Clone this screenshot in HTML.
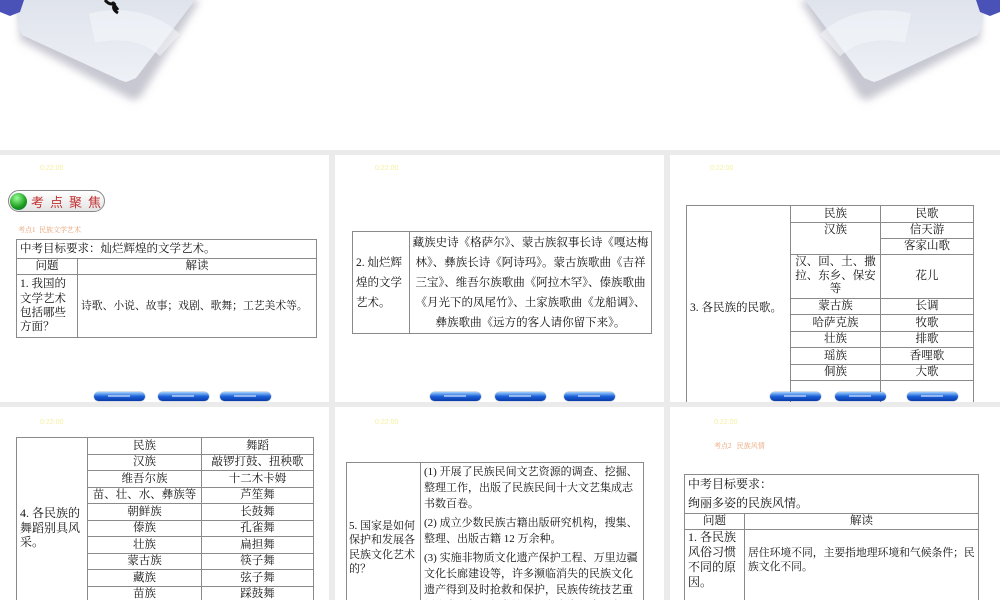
<!DOCTYPE html>
<html><head><meta charset="utf-8"><style>
*{margin:0;padding:0;box-sizing:border-box}
body{width:1000px;height:600px;overflow:hidden;background:#ebebeb;position:relative;font-family:"Liberation Serif","Noto Serif CJK SC","Noto Sans CJK SC",serif;color:#111}
.top{position:absolute;left:0;top:0;width:1000px;height:150px;background:#fff}
.s{position:absolute;background:#fff;overflow:hidden}
.tm{position:absolute;font-size:7px;color:#f4f0a0;font-family:"Liberation Sans",sans-serif}
table{position:absolute;border-collapse:collapse;font-size:11.5px;line-height:1.3;table-layout:fixed}
td{border:1px solid #8a8a8a;padding:0 3px;vertical-align:middle;overflow:hidden}
.c{text-align:center}
.btn{position:absolute;width:51px;height:9px;border-radius:5px;background:linear-gradient(#9fd0ff,#1a5fd8 50%,#0a3aa8);box-shadow:0 0 1px #024}
.btn:after{content:"";position:absolute;left:14px;top:3px;width:22px;height:2px;background:#d8e8ff;opacity:.6}
.k{position:absolute;font-size:7px;color:#e8a070}
</style></head><body>
<div class="top">
<svg width="1000" height="150" style="position:absolute;left:0;top:0">
<defs><linearGradient id="g" x1="0" y1="0" x2="0" y2="1"><stop offset="0" stop-color="#dfe3ec"/><stop offset="1" stop-color="#eef1f6"/></linearGradient>
<filter id="b"><feGaussianBlur stdDeviation="4"/></filter></defs>
<polygon points="18,0 200,0 140,98 132,100 20,40" fill="#c8c8d2" filter="url(#b)"/>
<polygon points="15,0 195,0 136,78 126,82 120,80 22,35 18,26" fill="url(#g)"/>
<path d="M92,28 Q140,18 170,45" stroke="#f4f6fa" stroke-width="30" fill="none" opacity=".6"/>
<polygon points="0,0 24,0 20,12 10,16 0,12" fill="#4a52b8"/>
<path d="M105,0 q5,6 10,3 q-4,6 3,10 M112,2 l6,8" stroke="#111" stroke-width="3" fill="none"/>
<g transform="translate(1000,0) scale(-1,1)">
<polygon points="18,0 200,0 140,98 132,100 20,40" fill="#c8c8d2" filter="url(#b)"/>
<polygon points="15,0 195,0 136,78 126,82 120,80 22,35 18,26" fill="url(#g)"/>
<path d="M92,28 Q140,18 170,45" stroke="#f4f6fa" stroke-width="30" fill="none" opacity=".6"/>
<polygon points="0,0 24,0 20,12 10,16 0,12" fill="#4a52b8"/>
</g></svg>
</div>

<!-- slide 1 -->
<div class="s" style="left:0;top:155px;width:329px;height:247px">
<div class="tm" style="left:40px;top:10px">0:22:00</div>
<div style="position:absolute;left:8px;top:35px;width:97px;height:22px;border:1px solid #888;border-radius:11px;background:linear-gradient(#fff,#e4e4e4)"></div>
<div style="position:absolute;left:10px;top:38px;width:17px;height:17px;border-radius:50%;background:radial-gradient(circle at 40% 30%,#9f9,#1a9a1a 60%,#065)"></div>
<div style="position:absolute;left:31px;top:37px;font-size:13px;color:#c03030;letter-spacing:6px;font-family:'Noto Sans CJK SC',sans-serif">考点聚焦</div>
<div class="k" style="left:18px;top:70px">考点1&nbsp; 民族文学艺术</div>
<table style="left:16px;top:84px;width:300px">
<colgroup><col style="width:61px"><col style="width:239px"></colgroup>
<tr style="height:19px"><td colspan="2">中考目标要求：灿烂辉煌的文学艺术。</td></tr>
<tr style="height:16px"><td class="c">问题</td><td class="c">解读</td></tr>
<tr style="height:63px"><td style="line-height:1.25">1. 我国的文学艺术包括哪些方面？</td><td style="font-size:10.8px;white-space:nowrap">诗歌、小说、故事；戏剧、歌舞；工艺美术等。</td></tr>
</table>
<div class="btn" style="left:94px;top:237px"></div><div class="btn" style="left:158px;top:237px"></div><div class="btn" style="left:220px;top:237px"></div>
</div>

<!-- slide 2 -->
<div class="s" style="left:335px;top:155px;width:329px;height:247px">
<div class="tm" style="left:40px;top:10px">0:22:00</div>
<table style="left:17px;top:76px;width:299px">
<colgroup><col style="width:57px"><col style="width:242px"></colgroup>
<tr style="height:102px"><td style="line-height:20px">2. 灿烂辉煌的文学艺术。</td><td class="c" style="line-height:20px;padding:0 2px">藏族史诗《格萨尔》、蒙古族叙事长诗《嘎达梅林》、彝族长诗《阿诗玛》。蒙古族歌曲《吉祥三宝》、维吾尔族歌曲《阿拉木罕》、傣族歌曲《月光下的凤尾竹》、土家族歌曲《龙船调》、彝族歌曲《远方的客人请你留下来》。</td></tr>
</table>
<div class="btn" style="left:95px;top:237px"></div><div class="btn" style="left:160px;top:237px"></div><div class="btn" style="left:229px;top:237px"></div>
</div>

<!-- slide 3 -->
<div class="s" style="left:670px;top:155px;width:330px;height:247px">
<div class="tm" style="left:40px;top:10px">0:22:00</div>
<table style="left:16px;top:50px;width:287px">
<colgroup><col style="width:104px"><col style="width:90px"><col style="width:93px"></colgroup>
<tr style="height:17px"><td rowspan="10">3. 各民族的民歌。</td><td class="c">民族</td><td class="c">民歌</td></tr>
<tr style="height:16px"><td class="c" rowspan="2" style="vertical-align:top">汉族</td><td class="c">信天游</td></tr>
<tr style="height:16px"><td class="c">客家山歌</td></tr>
<tr style="height:44px"><td class="c" style="line-height:1.2">汉、回、土、撒拉、东乡、保安等</td><td class="c">花儿</td></tr>
<tr style="height:16px"><td class="c">蒙古族</td><td class="c">长调</td></tr>
<tr style="height:17px"><td class="c">哈萨克族</td><td class="c">牧歌</td></tr>
<tr style="height:16px"><td class="c">壮族</td><td class="c">排歌</td></tr>
<tr style="height:17px"><td class="c">瑶族</td><td class="c">香哩歌</td></tr>
<tr style="height:16px"><td class="c">侗族</td><td class="c">大歌</td></tr>
<tr style="height:30px"><td></td><td></td></tr>
</table>
<div class="btn" style="left:100px;top:237px"></div><div class="btn" style="left:165px;top:237px"></div><div class="btn" style="left:237px;top:237px"></div>
</div>

<!-- slide 4 -->
<div class="s" style="left:0;top:407px;width:329px;height:193px">
<div class="tm" style="left:40px;top:12px">0:22:00</div>
<table style="left:16px;top:30px;width:297px">
<colgroup><col style="width:71px"><col style="width:114px"><col style="width:112px"></colgroup>
<tr style="height:17px"><td rowspan="11" style="line-height:1.2;font-size:12px">4. 各民族的舞蹈别具风采。</td><td class="c">民族</td><td class="c">舞蹈</td></tr>
<tr style="height:16px"><td class="c">汉族</td><td class="c">敲锣打鼓、扭秧歌</td></tr>
<tr style="height:17px"><td class="c">维吾尔族</td><td class="c">十二木卡姆</td></tr>
<tr style="height:16px"><td class="c">苗、壮、水、彝族等</td><td class="c">芦笙舞</td></tr>
<tr style="height:17px"><td class="c">朝鲜族</td><td class="c">长鼓舞</td></tr>
<tr style="height:16px"><td class="c">傣族</td><td class="c">孔雀舞</td></tr>
<tr style="height:17px"><td class="c">壮族</td><td class="c">扁担舞</td></tr>
<tr style="height:16px"><td class="c">蒙古族</td><td class="c">筷子舞</td></tr>
<tr style="height:17px"><td class="c">藏族</td><td class="c">弦子舞</td></tr>
<tr style="height:16px"><td class="c">苗族</td><td class="c">踩鼓舞</td></tr>
<tr style="height:16px"><td class="c"></td><td class="c"></td></tr>
</table>
</div>

<!-- slide 5 -->
<div class="s" style="left:335px;top:407px;width:329px;height:193px">
<div class="tm" style="left:40px;top:12px">0:22:00</div>
<table style="left:11px;top:55px;width:297px;font-size:11px">
<colgroup><col style="width:74px"><col style="width:223px"></colgroup>
<tr><td style="line-height:1.3;padding:0 2px">5. 国家是如何保护和发展各民族文化艺术的？</td>
<td style="line-height:1.45;padding:2px 3px">(1) 开展了民族民间文艺资源的调查、挖掘、整理工作，出版了民族民间十大文艺集成志书数百卷。<div style="height:3px"></div>(2) 成立少数民族古籍出版研究机构，搜集、整理、出版古籍 12 万余种。<div style="height:3px"></div>(3) 实施非物质文化遗产保护工程、万里边疆文化长廊建设等，许多濒临消失的民族文化遗产得到及时抢救和保护，民族传统技艺重新焕发生机。如藏族壁画和唐卡艺术，布依、苗、瑶、土家、壮、傣等民族的蜡染和</td></tr>
</table>
</div>

<!-- slide 6 -->
<div class="s" style="left:670px;top:407px;width:330px;height:193px">
<div class="tm" style="left:44px;top:12px">0:22:00</div>
<div class="k" style="left:44px;top:34px">考点2 &nbsp; 民族风情</div>
<table style="left:14px;top:67px;width:294px">
<colgroup><col style="width:60px"><col style="width:234px"></colgroup>
<tr style="height:36px"><td colspan="2" style="line-height:1.6;font-size:12px">中考目标要求：<br>绚丽多姿的民族风情。</td></tr>
<tr style="height:16px"><td class="c">问题</td><td class="c">解读</td></tr>
<tr style="height:76px"><td style="vertical-align:top;line-height:1.25;font-size:12px">1. 各民族风俗习惯不同的原因。</td><td style="vertical-align:top;padding-top:16px;font-size:10.8px">居住环境不同，主要指地理环境和气候条件；民族文化不同。</td></tr>
</table>
</div>
</body></html>
